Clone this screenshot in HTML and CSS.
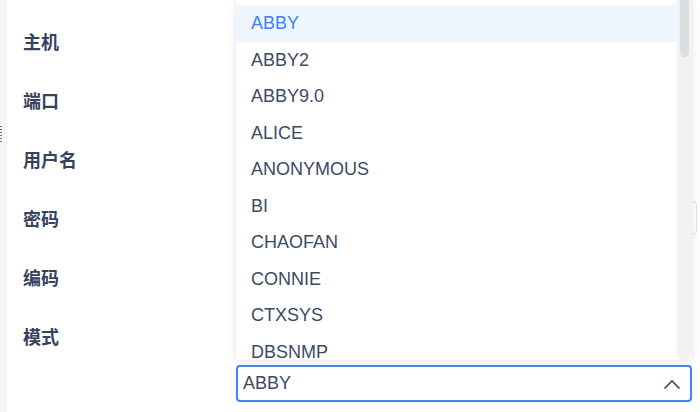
FILE: index.html
```html
<!DOCTYPE html>
<html lang="zh">
<head>
<meta charset="utf-8">
<link rel="stylesheet" href="styles.css">
</head>
<body>
<div class="page">
  <div class="strip"><div class="handle"></div></div>
  <div class="panel">
    <div class="form">
      <div class="label">主机</div><div class="ctrl"></div>
      <div class="label">端口</div><div class="ctrl"></div>
      <div class="label">用户名</div><div class="ctrl"></div>
      <div class="label">密码</div><div class="ctrl"><div class="input"></div></div>
      <div class="label">编码</div><div class="ctrl"></div>
      <div class="label">模式</div><div class="ctrl"></div>
      <div class="label"></div>
      <div class="ctrl top">
        <div class="select-wrap">
          <div class="dropdown">
            <ul class="list">
              <li class="item active">ABBY</li>
              <li class="item">ABBY2</li>
              <li class="item">ABBY9.0</li>
              <li class="item">ALICE</li>
              <li class="item">ANONYMOUS</li>
              <li class="item">BI</li>
              <li class="item">CHAOFAN</li>
              <li class="item">CONNIE</li>
              <li class="item">CTXSYS</li>
              <li class="item">DBSNMP</li>
            </ul>
            <div class="track"><div class="thumb"></div></div>
          </div>
          <div class="select">
            <span class="value">ABBY</span>
            <svg class="chev" width="18" height="11" viewBox="0 0 18 11"><path d="M1.5 9.5 L9 2 L16.5 9.5" fill="none" stroke="#3d4a63" stroke-width="1.7"/></svg>
          </div>
        </div>
      </div>
    </div>
  </div>
</div>
</body>
</html>
```
FILE: styles.css
```css
* { box-sizing: border-box; }
html, body { margin: 0; padding: 0; }
body {
  background: #f5f6f8;
  font-family: "Liberation Sans", Arial, "Noto Sans CJK SC", sans-serif;
  color: #3d4a63;
  width: 700px;
  height: 412px;
  overflow: hidden;
}
.page { display: flex; height: 412px; }
.strip {
  width: 7px;
  background: #f4f5f7;
  display: flex;
  flex-direction: column;
}
.handle {
  margin-top: 126px;
  width: 2px;
  height: 18px;
  background: repeating-linear-gradient(to bottom, #6b7280 0 1.5px, transparent 1.5px 3px);
}
.panel {
  flex: 1;
  background: #fff;
  padding: 11px 0 0 16px;
}
.form {
  display: grid;
  grid-template-columns: 213px 1fr;
  grid-auto-rows: 59px;
}
.label {
  display: flex;
  align-items: center;
  font-family: "Noto Sans CJK SC", sans-serif;
  font-weight: 700;
  font-size: 18px;
  color: #35435d;
}
.ctrl { display: flex; align-items: center; }
.ctrl.top { align-items: flex-start; }
.input {
  flex: 1;
  height: 34px;
  margin-right: 3px;
  margin-left: 20px;
  border: 1px solid #dcdfe6;
  border-radius: 4px;
}
.select-wrap {
  position: relative;
  width: 456px;
}
.select {
  height: 37px;
  border: 2px solid #3f87f5;
  border-radius: 4px;
  background: #fff;
  display: flex;
  align-items: center;
  justify-content: space-between;
  padding: 0 9px 0 5px;
  font-size: 18px;
  color: #3d4a63;
}
.chev { margin-top: 1px; }
.dropdown {
  position: absolute;
  left: -1px;
  right: -1px;
  bottom: calc(100% + 4px);
  height: 361px;
  background: #fff;
  border: 1px solid #ebeef3;
  border-top: 0;
  border-radius: 0 0 4px 4px;
  box-shadow: 0 2px 10px rgba(0, 0, 0, 0.08);
  display: flex;
  overflow: hidden;
}
.list {
  list-style: none;
  margin: 0;
  padding: 5px 0 0;
  flex: 1;
}
.item {
  height: 36.5px;
  line-height: 36.5px;
  padding-left: 15px;
  font-size: 18px;
  color: #3d4a63;
  white-space: nowrap;
}
.item.active {
  background: #f0f6ff;
  color: #3b82f6;
}
.track {
  width: 15px;
  background: #f2f2f3;
  border-radius: 0 0 6px 6px;
  display: flex;
  justify-content: center;
}
.thumb {
  width: 9px;
  height: 57px;
  background: #dcdde1;
  border-radius: 0 0 5px 5px;
}
```
